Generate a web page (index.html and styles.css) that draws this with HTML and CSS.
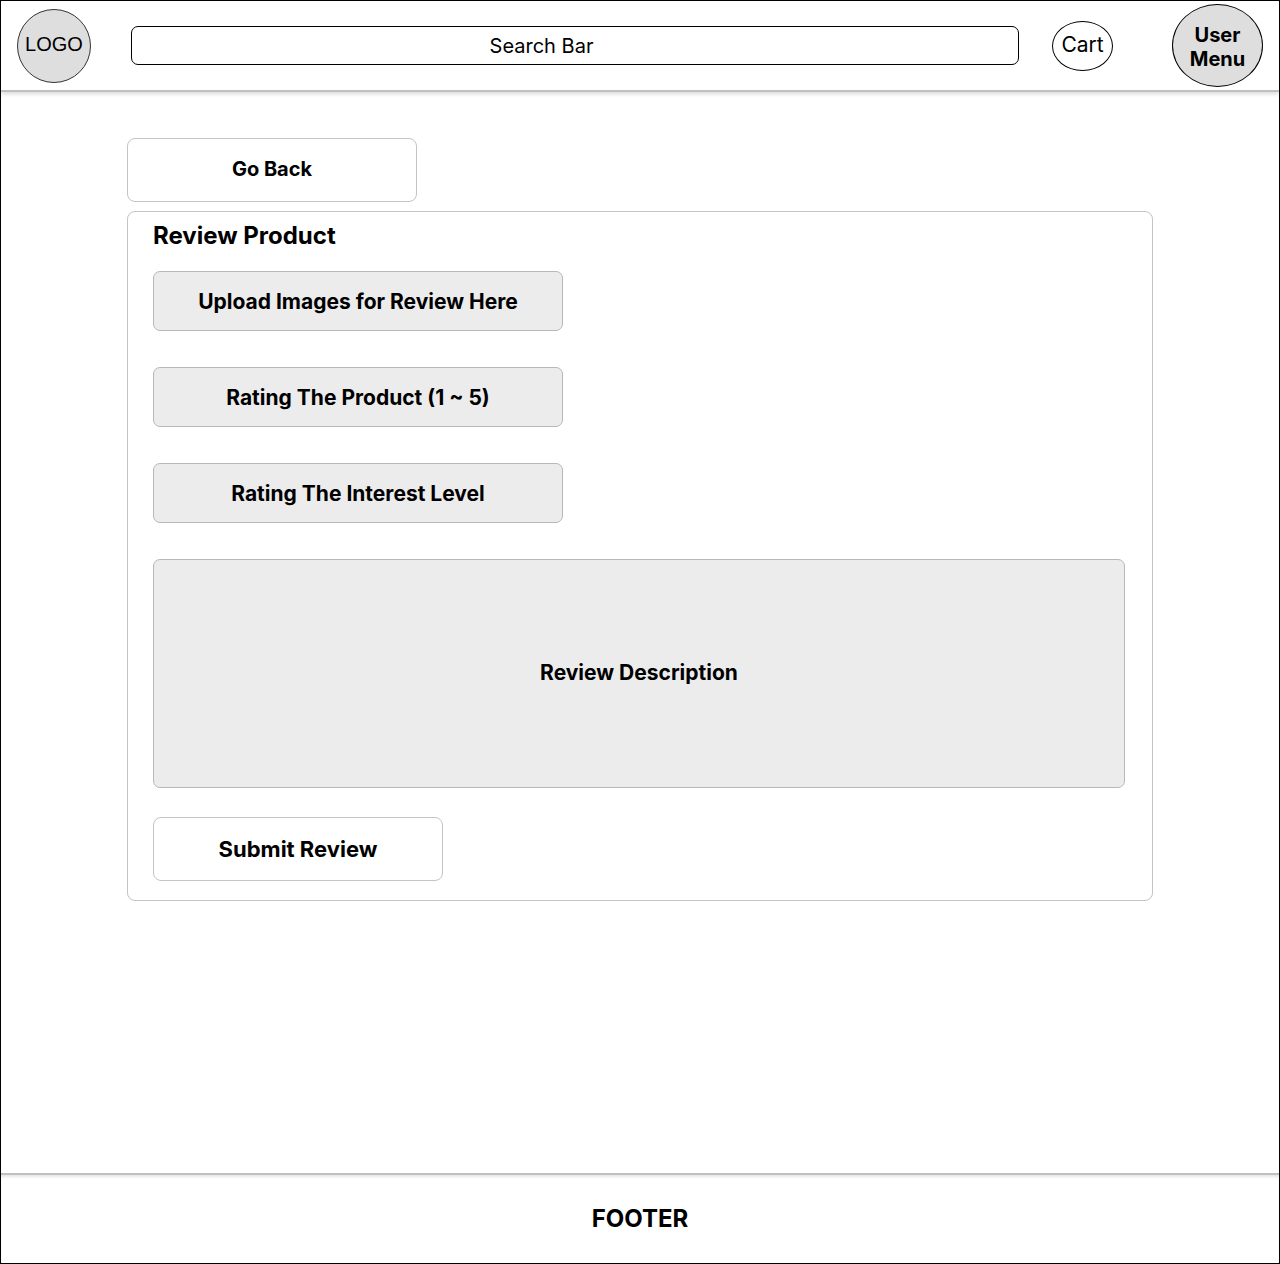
FILE: index.html
```html
<!DOCTYPE html>
<html>
<head>
<meta charset="utf-8">
<title>Review Product</title>
<link rel="stylesheet" href="styles.css">
</head>
<body>
<div class="page">
	<div class="header">
		<div class="logo">LOGO</div>
		<div class="search">Search Bar</div>
		<div class="cart">Cart</div>
		<div class="usermenu">User<br>Menu</div>
	</div>

	<div class="main">
		<div class="btn goback">Go Back</div>
		<div class="card">
			<div class="card-title">Review Product</div>
			<div class="field">Upload Images for Review Here</div>
			<div class="field">Rating The Product (1 ~ 5)</div>
			<div class="field">Rating The Interest Level</div>
			<div class="field desc">Review Description</div>
			<div class="btn submit">Submit Review</div>
		</div>
	</div>

	<div class="footer">FOOTER</div>
</div>
</body>
</html>
```

FILE: styles.css
```css
html, body{
margin: 0;
padding: 0;
}
body{
font-family: Inter, "Noto Sans", sans-serif;
color: #000;
background: #fff;
}
.page{
width: 1280px;
height: 1264px;
box-sizing: border-box;
border: 1px solid #000;
display: flex;
flex-direction: column;
}

/* header */
.header{
height: 89px;
flex: none;
display: flex;
align-items: center;
padding-left: 16px;
border-bottom: 2px solid #c0c0c0;
box-shadow: 0 2px 4px rgba(0,0,0,0.15);
position: relative;
}
.logo{
width: 74px;
height: 74px;
box-sizing: border-box;
border-radius: 50%;
border: 1px solid #333;
background: #dedede;
display: flex;
align-items: center;
justify-content: center;
font-family: "Liberation Sans", Arial, sans-serif;
font-size: 20px;
padding-bottom: 2px;
}
.search{
width: 888px;
height: 39px;
box-sizing: border-box;
margin-left: 40px;
padding-right: 67px;
border: 1px solid #000;
border-radius: 7px;
display: flex;
align-items: center;
justify-content: center;
font-size: 20px;
}
.cart{
width: 61px;
height: 50px;
box-sizing: border-box;
margin-left: 33px;
padding-bottom: 3px;
border: 1px solid #000;
border-radius: 50%;
display: flex;
align-items: center;
justify-content: center;
font-size: 21px;
}
.usermenu{
width: 91px;
height: 83px;
box-sizing: border-box;
margin-left: 59px;
padding-top: 2px;
border: 1px solid #000;
border-radius: 50%;
background: #dedede;
display: flex;
align-items: center;
justify-content: center;
text-align: center;
font-weight: 700;
font-size: 20px;
line-height: 24px;
}

/* main */
.main{
flex: 1;
padding: 46px 0 0 126px;
}
.btn{
box-sizing: border-box;
width: 290px;
height: 64px;
border: 1px solid #c4c4c4;
border-radius: 8px;
background: #fff;
display: flex;
align-items: center;
justify-content: center;
font-weight: 700;
}
.goback{
font-size: 20px;
padding-bottom: 2px;
}
.card{
width: 1026px;
box-sizing: border-box;
margin-top: 9px;
border: 1px solid #c4c4c4;
border-radius: 8px;
padding: 9px 27px 19px 25px;
display: flex;
flex-direction: column;
align-items: flex-start;
}
.card-title{
font-size: 24px;
font-weight: 700;
line-height: 29px;
margin-bottom: 21px;
}
.field{
box-sizing: border-box;
width: 410px;
height: 60px;
background: #ececec;
border: 1px solid #b8b8b8;
border-radius: 7px;
display: flex;
align-items: center;
justify-content: center;
font-weight: 700;
font-size: 21px;
margin-bottom: 36px;
}
.field.desc{
width: 972px;
height: 229px;
margin-bottom: 29px;
padding-bottom: 2px;
}
.submit{
font-size: 22px;
}

/* footer */
.footer{
height: 87px;
flex: none;
box-sizing: content-box;
border-top: 2px solid #c0c0c0;
box-shadow: inset 0 3px 3px -1px rgba(0,0,0,0.1);
display: flex;
align-items: center;
justify-content: center;
font-weight: 700;
font-size: 24px;
padding-bottom: 1px;
}
```
